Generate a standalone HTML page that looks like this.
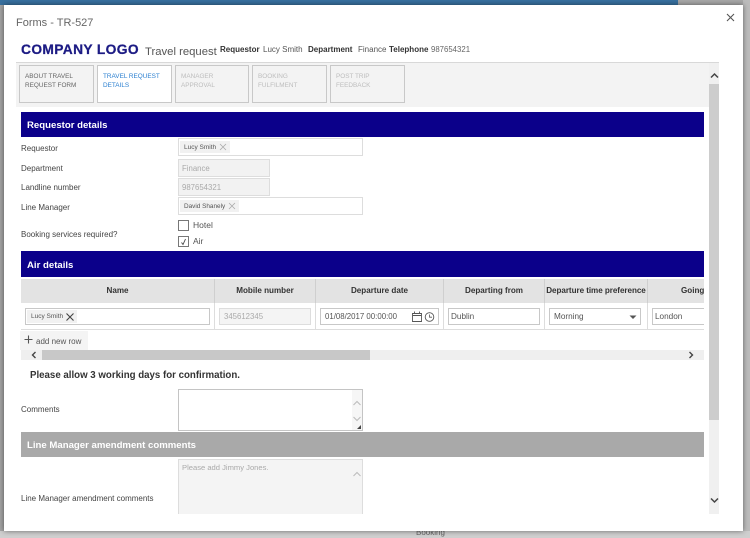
<!DOCTYPE html>
<html><head><meta charset="utf-8">
<style>
html,body{margin:0;padding:0}
body{width:750px;height:538px;overflow:hidden;position:relative;background:#a8a8a8;font-family:"Liberation Sans",sans-serif;color:#333}
#w{position:absolute;left:0;top:0;width:750px;height:538px;filter:blur(.35px);overflow:hidden}
#w div,#w span.a,#w svg{position:absolute;box-sizing:border-box}
.t{white-space:nowrap;line-height:12px}
.lb{font-size:8px;color:#444;left:21px}
.bx{border:1px solid #ddd;background:#fff}
.dis{background:#f2f2f2;color:#aaa;font-size:7.8px;line-height:18px;padding-left:3px;border:1px solid #ddd}
.tab{top:65px;width:75px;height:38px;background:#f3f3f3;border:1px solid #c8c8c8;font-size:6.4px;line-height:9px;padding:6px 0 0 5px;color:#666}
.off{color:#bdbdbd}
.hd{left:21px;width:683px;background:#0b008a;color:#fff;font-weight:bold;font-size:9.6px;padding-left:6px}
.th{top:279px;height:24px;background:#e3e3e3;border-right:1px solid #cfcfcf;font-weight:bold;font-size:8.1px;text-align:center;line-height:24px;color:#333;white-space:nowrap;overflow:hidden}
.inp{top:308px;height:17px;border:1px solid #c8c8c8;background:#fff;font-size:8.2px;line-height:16px;padding-left:4px;color:#555;white-space:nowrap;overflow:hidden}
.tag{background:#f1f1f1;font-size:6.5px;color:#555;line-height:14px;height:12px;padding-left:4px;white-space:nowrap}
</style></head><body>
<div id="w">
<div style="left:0;top:0;width:678px;height:5px;background:#38709f"></div>
<div style="left:678px;top:0;width:72px;height:5px;background:#a8a8a8"></div>
<div style="left:0;top:5px;width:4px;height:533px;background:#a4a4a4"></div>
<div style="left:743px;top:0;width:7px;height:538px;background:#bcbcbc"></div>
<div style="left:0;top:531px;width:750px;height:7px;background:#cfcfcf"></div>
<div class="t" style="left:416px;top:527px;font-size:8px;color:#666">Booking</div>

<div style="left:4px;top:5px;width:739px;height:526px;background:#fff;box-shadow:0 0 5px rgba(0,0,0,.5)"></div>

<div class="t" style="left:16px;top:17px;font-size:11px;color:#666">Forms - TR-527</div>
<svg style="left:726px;top:13px" width="9" height="9" viewBox="0 0 9 9"><path d="M1 1L8 8M8 1L1 8" stroke="#555" stroke-width="1.1" fill="none"/></svg>

<div class="t" style="left:21px;top:43px;font-size:13.8px;font-weight:bold;color:#1c1b84;letter-spacing:.35px;line-height:14px;-webkit-text-stroke:.25px #1c1b84">COMPANY LOGO</div>
<div class="t" style="left:145px;top:46px;font-size:11.3px;color:#555">Travel request</div>
<div class="t" style="left:220px;top:44px;font-size:8px;font-weight:bold;color:#333">Requestor</div>
<div class="t" style="left:263px;top:44px;font-size:8px;color:#555">Lucy Smith</div>
<div class="t" style="left:308px;top:44px;font-size:8px;font-weight:bold;color:#333">Department</div>
<div class="t" style="left:358px;top:44px;font-size:8px;color:#555">Finance</div>
<div class="t" style="left:389px;top:44px;font-size:8px;font-weight:bold;color:#333">Telephone</div>
<div class="t" style="left:431px;top:44px;font-size:7.8px;color:#666">987654321</div>

<div style="left:16px;top:62px;width:703px;height:45px;background:#f3f3f3;border-top:1px solid #d8d8d8"></div>
<div class="tab" style="left:19px">ABOUT TRAVEL<br>REQUEST FORM</div>
<div class="tab" style="left:97px;background:#fff;color:#2a7fd0">TRAVEL REQUEST<br>DETAILS</div>
<div class="tab off" style="left:175px;width:74px">MANAGER<br>APPROVAL</div>
<div class="tab off" style="left:252px">BOOKING<br>FULFILMENT</div>
<div class="tab off" style="left:330px">POST TRIP<br>FEEDBACK</div>

<div style="left:709px;top:63px;width:10px;height:451px;background:#f0f0f0"></div>
<div style="left:709px;top:84px;width:10px;height:336px;background:#cdcdcd"></div>
<svg style="left:710px;top:72px" width="9" height="8" viewBox="0 0 9 8"><path d="M1 5.5L4.5 2L8 5.5" stroke="#444" stroke-width="1.5" fill="none"/></svg>
<svg style="left:710px;top:496px" width="9" height="8" viewBox="0 0 9 8"><path d="M1 2.5L4.5 6L8 2.5" stroke="#444" stroke-width="1.5" fill="none"/></svg>

<div class="hd" style="top:112px;height:25px;line-height:27px">Requestor details</div>

<div class="t lb" style="top:143px">Requestor</div>
<div class="bx" style="left:178px;top:138px;width:185px;height:18px"></div>
<div class="tag" style="left:180px;top:141px;width:50px">Lucy Smith</div>
<svg style="left:219px;top:143px" width="8" height="8" viewBox="0 0 8 8"><path d="M1 1L7 7M7 1L1 7" stroke="#aaa" stroke-width=".8" fill="none"/></svg>

<div class="t lb" style="top:163px">Department</div>
<div class="dis" style="left:178px;top:159px;width:92px;height:18px;line-height:17px">Finance</div>
<div class="t lb" style="top:182px">Landline number</div>
<div class="dis" style="left:178px;top:178px;width:92px;height:18px;line-height:17px">987654321</div>
<div class="t lb" style="top:202px">Line Manager</div>
<div class="bx" style="left:178px;top:197px;width:185px;height:18px"></div>
<div class="tag" style="left:180px;top:200px;width:59px;font-size:6.4px">David Shanely</div>
<svg style="left:228px;top:202px" width="8" height="8" viewBox="0 0 8 8"><path d="M1 1L7 7M7 1L1 7" stroke="#aaa" stroke-width=".8" fill="none"/></svg>

<div class="t lb" style="top:229px">Booking services required?</div>
<div style="left:178px;top:220px;width:11px;height:11px;border:1px solid #777;background:#fff"></div>
<div class="t" style="left:193px;top:219px;font-size:8.5px;color:#555">Hotel</div>
<div style="left:178px;top:236px;width:11px;height:11px;border:1px solid #777;background:#fff"></div>
<svg style="left:179px;top:237px" width="9" height="9" viewBox="0 0 9 9"><path d="M2.5 5.5L4 7.5L6.5 2" stroke="#444" stroke-width=".9" fill="none"/></svg>
<div class="t" style="left:193px;top:235px;font-size:8.5px;color:#555">Air</div>

<div class="hd" style="top:251px;height:26px;line-height:29px">Air details</div>

<div class="th" style="left:21px;width:194px">Name</div>
<div class="th" style="left:215px;width:101px">Mobile number</div>
<div class="th" style="left:316px;width:128px">Departure date</div>
<div class="th" style="left:444px;width:101px">Departing from</div>
<div class="th" style="left:545px;width:103px;letter-spacing:-.05px">Departure time preference</div>
<div class="th" style="left:648px;width:56px;border-right:0;text-align:left;padding-left:33px">Going</div>

<div style="left:21px;top:303px;width:683px;height:27px;border-bottom:1px solid #ddd"></div>
<div style="left:214px;top:303px;width:1px;height:27px;background:#ddd"></div>
<div style="left:315px;top:303px;width:1px;height:27px;background:#ddd"></div>
<div style="left:443px;top:303px;width:1px;height:27px;background:#ddd"></div>
<div style="left:544px;top:303px;width:1px;height:27px;background:#ddd"></div>
<div style="left:647px;top:303px;width:1px;height:27px;background:#ddd"></div>

<div class="inp" style="left:25px;width:185px"></div>
<div class="tag" style="left:27px;top:310px;width:50px;height:13px;line-height:14px">Lucy Smith</div>
<svg style="left:65px;top:312px" width="10" height="10" viewBox="0 0 10 10"><path d="M1.5 1.5L8.5 8.5M8.5 1.5L1.5 8.5" stroke="#444" stroke-width="1.1" fill="none"/></svg>
<div class="inp" style="left:219px;width:92px;background:#f4f4f4;color:#aaa;border-color:#ddd;font-size:7.8px">345612345</div>
<div class="inp" style="left:320px;width:119px;font-size:7.85px">01/08/2017 00:00:00</div>
<svg style="left:411px;top:310px" width="26" height="13" viewBox="0 0 26 13"><path d="M1.5 3.5H10.5V11.5H1.5ZM1.5 5.5H10.5M3.5 1.5V3.5M8.5 1.5V3.5" stroke="#555" stroke-width=".9" fill="none"/><circle cx="18.5" cy="7" r="4.3" stroke="#555" stroke-width=".9" fill="none"/><path d="M18.5 4.5V7.2H21" stroke="#555" stroke-width=".8" fill="none"/></svg>
<div class="inp" style="left:448px;width:92px;padding-left:2px">Dublin</div>
<div class="inp" style="left:549px;width:92px">Morning</div>
<svg style="left:629px;top:314px" width="8" height="6" viewBox="0 0 8 6"><path d="M.5 1.5H7.5L4 5Z" fill="#555"/></svg>
<div class="inp" style="left:652px;width:52px;border-right:0;padding-left:2px">London</div>

<div style="left:20px;top:331px;width:68px;height:19px;background:#f4f4f4"></div>
<svg style="left:24px;top:335px" width="9" height="9" viewBox="0 0 9 9"><path d="M4.5 .5V8.5M.5 4.5H8.5" stroke="#555" stroke-width="1.1" fill="none"/></svg>
<div class="t" style="left:36px;top:336px;font-size:8px;color:#555">add new row</div>

<div style="left:21px;top:350px;width:683px;height:10px;background:#efefef"></div>
<div style="left:42px;top:350px;width:328px;height:10px;background:#c8c8c8"></div>
<svg style="left:30px;top:351px" width="8" height="8" viewBox="0 0 8 8"><path d="M5.5 1L2.5 4L5.5 7" stroke="#444" stroke-width="1.4" fill="none"/></svg>
<svg style="left:687px;top:351px" width="8" height="8" viewBox="0 0 8 8"><path d="M2.5 1L5.5 4L2.5 7" stroke="#444" stroke-width="1.4" fill="none"/></svg>

<div class="t" style="left:30px;top:370px;font-size:9.7px;font-weight:bold;color:#333">Please allow 3 working days for confirmation.</div>

<div class="t lb" style="top:404px">Comments</div>
<div style="left:178px;top:389px;width:185px;height:42px;border:1px solid #c4c4c4;background:#fff"></div>
<div style="left:352px;top:390px;width:10px;height:40px;background:#f6f6f6"></div>
<svg style="left:352px;top:398px" width="10" height="32" viewBox="0 0 10 32"><path d="M1.5 7L5 3.5L8.5 7M1.5 19L5 22.5L8.5 19" stroke="#bbb" stroke-width="1" fill="none"/><path d="M9 27V31H5Z" fill="#444"/></svg>

<div class="hd" style="top:432px;height:25px;line-height:27px;background:#a9a9a9">Line Manager amendment comments</div>

<div class="t lb" style="top:493px">Line Manager amendment comments</div>
<div style="left:178px;top:459px;width:185px;height:55px;background:#f4f4f4;border:1px solid #ddd;border-bottom:0"></div>
<div class="t" style="left:182px;top:462px;font-size:7.6px;color:#aaa">Please add Jimmy Jones.</div>
<svg style="left:352px;top:470px" width="10" height="8" viewBox="0 0 10 8"><path d="M1.5 6L5 2.5L8.5 6" stroke="#bbb" stroke-width="1" fill="none"/></svg>
</div>
</body></html>
